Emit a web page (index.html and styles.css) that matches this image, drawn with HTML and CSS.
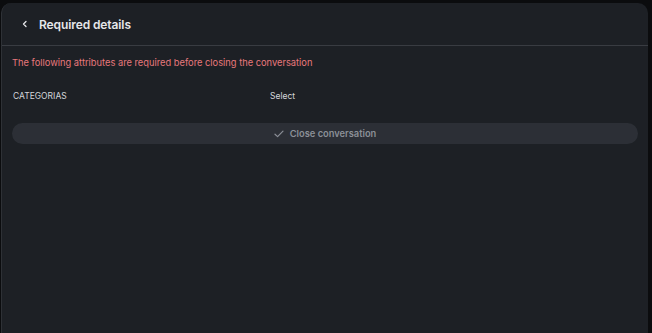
FILE: index.html
```html
<!DOCTYPE html>
<html lang="en">
<head>
  <meta charset="UTF-8">
  <meta name="viewport" content="width=device-width, initial-scale=1.0">
  <title>Required details</title>
  <link rel="stylesheet" href="styles.css">
</head>
<body>
  <div class="panel">
    <header class="panel-head">
      <button class="back" aria-label="Back">
        <svg width="8" height="8" viewBox="0 0 8 8"><path d="M5 1.5 2.5 4 5 6.5" fill="none" stroke="#e6e7ea" stroke-width="1.3" stroke-linecap="round" stroke-linejoin="round"/></svg>
      </button>
      <h1>Required details</h1>
    </header>

    <section class="panel-body">
      <p class="warning">The following attributes are required before closing the conversation</p>
      <div class="attr-row">
        <span class="attr-name">CATEGORIAS</span>
        <span class="attr-value">Select</span>
      </div>
      <button class="close-btn">
        <svg width="10" height="8" viewBox="0 0 10 8"><path d="M1 4.2 3.6 6.6 9 1.2" fill="none" stroke="#8b8f97" stroke-width="1.2" stroke-linecap="round" stroke-linejoin="round"/></svg>
        Close conversation
      </button>
    </section>
  </div>
</body>
</html>
```

FILE: styles.css
```css
:root {
  --page-bg: #0b0c0e;
  --panel-bg: #1d2025;
  --line: #393c42;
  --text: #e6e7ea;
  --muted: #8b8f97;
  --red: #e8787c;
}
* { box-sizing: border-box; margin: 0; padding: 0; }
html, body {
  height: 100%;
  background: var(--page-bg);
  font-family: Inter, "Noto Sans", sans-serif;
  color: var(--text);
  overflow: hidden;
}
body { padding: 3px 4px 0 1px; }
/* Panel */
.panel {
  height: 100%;
  background: var(--panel-bg);
  border-radius: 10px 10px 0 0;
  border-left: 1px solid #2e3136;
}
.panel-head {
  height: 43px;
  display: flex; align-items: center;
  padding: 0 0 0 19px;
  border-bottom: 1px solid var(--line);
}
.back {
  background: none; border: none;
  width: 8px; height: 8px;
  display: flex; align-items: center; justify-content: center;
  margin-right: 10px;
}
.panel-head h1 {
  font-size: 12px; font-weight: 600;
  letter-spacing: -0.1px;
}
/* Body */
.panel-body { padding: 10px 10px 0 10px; }
.warning {
  color: var(--red);
  font-size: 9.3px;
  line-height: 13px;
}
.attr-row {
  display: flex;
  margin-top: 21px;
  font-size: 8.5px;
  line-height: 12px;
  color: #d4d6da;
}
.attr-name { width: 258px; padding-left: 1px; }
.close-btn {
  width: 100%; height: 21px;
  margin-top: 21px;
  border: none; border-radius: 11px;
  background: #2c2f36;
  color: var(--muted);
  font-family: inherit; font-size: 9.3px; font-weight: 600;
  display: flex; align-items: center; justify-content: center;
  gap: 6px;
}
```
